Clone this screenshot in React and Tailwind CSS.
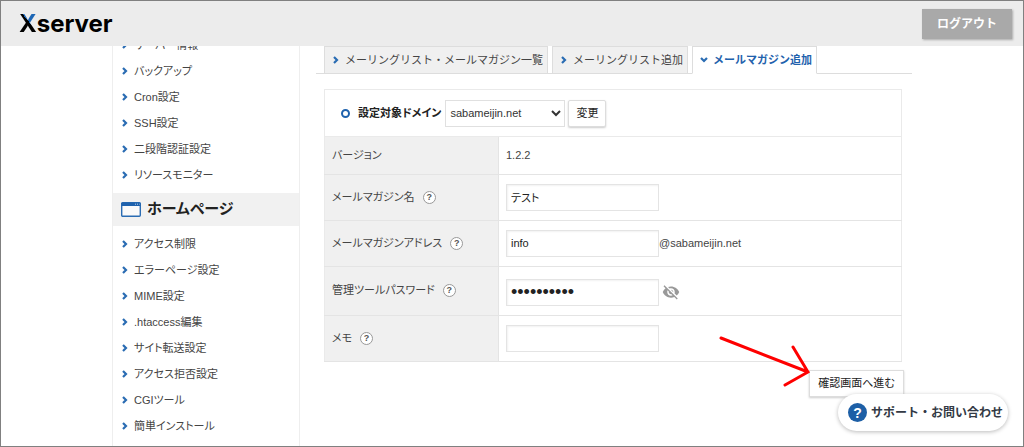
import React, { useState } from "react";
import { MdVisibilityOff } from "react-icons/md";

const serverMenu = [
  "サーバー情報",
  "バックアップ",
  "Cron設定",
  "SSH設定",
  "二段階認証設定",
  "リソースモニター",
];

const homepageMenu = [
  "アクセス制限",
  "エラーページ設定",
  "MIME設定",
  ".htaccess編集",
  "サイト転送設定",
  "アクセス拒否設定",
  "CGIツール",
  "簡単インストール",
];

const tabs = [
  { label: "メーリングリスト・メールマガジン一覧" },
  { label: "メーリングリスト追加" },
  { label: "メールマガジン追加", active: true },
];

const inputClass =
  "h-[27px] w-[153px] border border-[#e4e4e4] bg-white px-1 text-[#222] shadow-[inset_1px_1px_2px_#f2f2f2] outline-none";

const Chevron = ({ down = false }) => (
  <svg
    viewBox="0 0 6 8"
    className={`h-2 w-1.5 shrink-0 ${down ? "rotate-90" : ""}`}
    fill="none"
    stroke="#2a6cb3"
    strokeWidth="2.2"
    aria-hidden="true"
  >
    <path d="M1 1l3 3-3 3" />
  </svg>
);

const WindowIcon = () => (
  <svg viewBox="0 0 20 15" className="h-[15px] w-5 shrink-0" aria-hidden="true">
    <rect x="0.7" y="0.7" width="18.6" height="13.6" rx="1" fill="#fafafa" stroke="#2a6cb3" strokeWidth="1.4" />
    <path d="M0.5 1.2q0-.7.7-.7h17.6q.7 0 .7.7V4H.5z" fill="#1f62ad" />
    <path d="M14 2.2h1M16 2.2h1M18 2.2h.6" stroke="#b9d0ea" />
  </svg>
);

const HelpButton = ({ label }) => (
  <button
    type="button"
    aria-label={`${label}のヘルプ`}
    className="ml-2 flex size-[13px] shrink-0 items-center justify-center rounded-full border border-[#999] bg-white text-[9px] leading-none font-bold text-[#555]"
  >
    ?
  </button>
);

const MenuList = ({ items }) => (
  <ul>
    {items.map((item) => (
      <li key={item}>
        <a href="#" className="flex h-[26px] items-center gap-1.5 pl-[9px]">
          <Chevron />
          {item}
        </a>
      </li>
    ))}
  </ul>
);

const FormRow = ({ id, label, help = false, children }) => (
  <tr className="border-b border-[#e4e4e4]">
    <th
      scope="row"
      className="w-[174px] border-r border-[#e4e4e4] bg-[#f0f0f0] px-[7px] text-left font-normal"
    >
      <div className="flex items-center">
        {id ? <label htmlFor={id}>{label}</label> : label}
        {help && <HelpButton label={label} />}
      </div>
    </th>
    <td className={id ? "px-[7px] py-[9px]" : "h-[37px] px-[7px]"}>
      <div className="flex items-center">{children}</div>
    </td>
  </tr>
);

const App = () => {
  const [name, setName] = useState("テスト");
  const [address, setAddress] = useState("info");
  const [password, setPassword] = useState("mailmag123");
  const [memo, setMemo] = useState("");

  return (
    <div className="relative flex h-screen flex-col overflow-hidden border border-[#808080] bg-white font-['Liberation_Sans','Noto_Sans_CJK_JP',sans-serif] text-[11px] text-[#444]">
      <header className="z-10 flex h-[45px] shrink-0 items-center justify-between bg-[#ececec] pr-[11px] pl-[18px]">
        <a href="#" className="flex font-['Inter',sans-serif] text-2xl leading-none font-bold text-black">
          <span className="bg-[linear-gradient(50deg,#000_57%,#1c66b5_57%)] bg-clip-text text-transparent">X</span>
          server
        </a>
        <button
          type="button"
          className="h-[30px] w-[90px] bg-[#a9a9a9] text-xs font-bold text-white shadow-[1px_1px_2px_#aaa]"
        >
          ログアウト
        </button>
      </header>

      <div className="mx-auto flex min-h-0 w-full max-w-[800px] flex-1">
        <nav className="w-[188px] shrink-0 border-x border-[#eee] [font-feature-settings:'palt']">
          {/* The list is scrolled up under the header */}
          <div className="-mt-3.5">
            <MenuList items={serverMenu} />
          </div>
          <h2 className="my-[5px] flex h-[33px] items-center gap-1.5 bg-[#f1f1f1] pl-2 text-[15px] font-bold text-[#222]">
            <WindowIcon />
            ホームページ
          </h2>
          <MenuList items={homepageMenu} />
        </nav>

        <main className="ml-4 min-w-0 flex-1">
          <div className="flex h-7 gap-1 border-b border-[#ddd] pl-2">
            {tabs.map(({ label, active }) => (
              <a
                key={label}
                href="#"
                className={`flex h-7 items-center gap-1.5 border border-[#ddd] pr-1 pl-2 whitespace-nowrap ${
                  active ? "border-b-white bg-white font-bold text-[#1f62ad]" : "bg-[#f0f0f0]"
                }`}
              >
                <Chevron down={active} />
                {label}
              </a>
            ))}
          </div>

          <form
            className="mt-[15px] mr-2.5 ml-2 [font-feature-settings:'palt']"
            onSubmit={(e) => e.preventDefault()}
          >
            <div className="flex h-12 items-center border border-[#eaeaea] pl-4">
              <span className="mr-2 size-[9px] rounded-full border-2 border-[#1f62ad]" />
              <label htmlFor="domain" className="mr-1 font-bold text-[#222]">
                設定対象ドメイン
              </label>
              <select
                id="domain"
                className="mr-[3px] h-[27px] w-[120px] border border-[#e0e0e0] bg-white text-[11px] text-[#333]"
              >
                <option>sabameijin.net</option>
              </select>
              <button
                type="button"
                className="h-[27px] w-[38px] rounded-xs border border-[#ddd] bg-white text-[#222] shadow-[0_1px_2px_#ccc]"
              >
                変更
              </button>
            </div>

            <table className="w-full border-collapse border-x border-[#eaeaea]">
              <tbody>
                <FormRow label="バージョン">1.2.2</FormRow>
                <FormRow id="name" label="メールマガジン名" help>
                  <input id="name" className={inputClass} value={name} onChange={(e) => setName(e.target.value)} />
                </FormRow>
                <FormRow id="address" label="メールマガジンアドレス" help>
                  <input
                    id="address"
                    className={inputClass}
                    value={address}
                    onChange={(e) => setAddress(e.target.value)}
                  />
                  @sabameijin.net
                </FormRow>
                <FormRow id="password" label="管理ツールパスワード" help>
                  <div className="flex items-center pt-[3px]">
                    <input
                      id="password"
                      type="password"
                      className={`${inputClass} text-lg`}
                      value={password}
                      onChange={(e) => setPassword(e.target.value)}
                    />
                    <button type="button" aria-label="パスワードを表示" className="ml-[3px] text-[#999]">
                      <MdVisibilityOff className="size-[18px]" />
                    </button>
                  </div>
                </FormRow>
                <FormRow id="memo" label="メモ" help>
                  <input id="memo" className={inputClass} value={memo} onChange={(e) => setMemo(e.target.value)} />
                </FormRow>
              </tbody>
            </table>

            <div className="mt-2 -mr-0.5 flex justify-end">
              <button
                type="submit"
                className="h-[27px] w-[95px] border border-[#ddd] bg-white text-[#222] shadow-[0_1px_2px_#ccc]"
              >
                確認画面へ進む
              </button>
            </div>
          </form>
        </main>
      </div>

      {/* Arrow pointing at the submit button */}
      <svg
        viewBox="0 0 92 52"
        className="pointer-events-none absolute top-[334px] left-[717px] z-10 h-[52px] w-[92px]"
        fill="none"
        stroke="#fe0000"
        strokeWidth="3"
        strokeLinecap="round"
        aria-hidden="true"
      >
        <path d="M3 3L90 37M75 12l15 25-23 13" />
      </svg>

      <button
        type="button"
        className="absolute right-[15px] bottom-[15px] z-20 flex h-[37px] w-[170px] items-center gap-1 rounded-full bg-white pl-2.5 text-xs font-bold whitespace-nowrap text-[#333a45] shadow-[0_1px_4px_#bbb]"
      >
        <span className="flex size-[19px] shrink-0 items-center justify-center rounded-full bg-[#1d5fa6] text-sm leading-none text-white">
          ?
        </span>
        サポート・お問い合わせ
      </button>
    </div>
  );
};

export default App;
